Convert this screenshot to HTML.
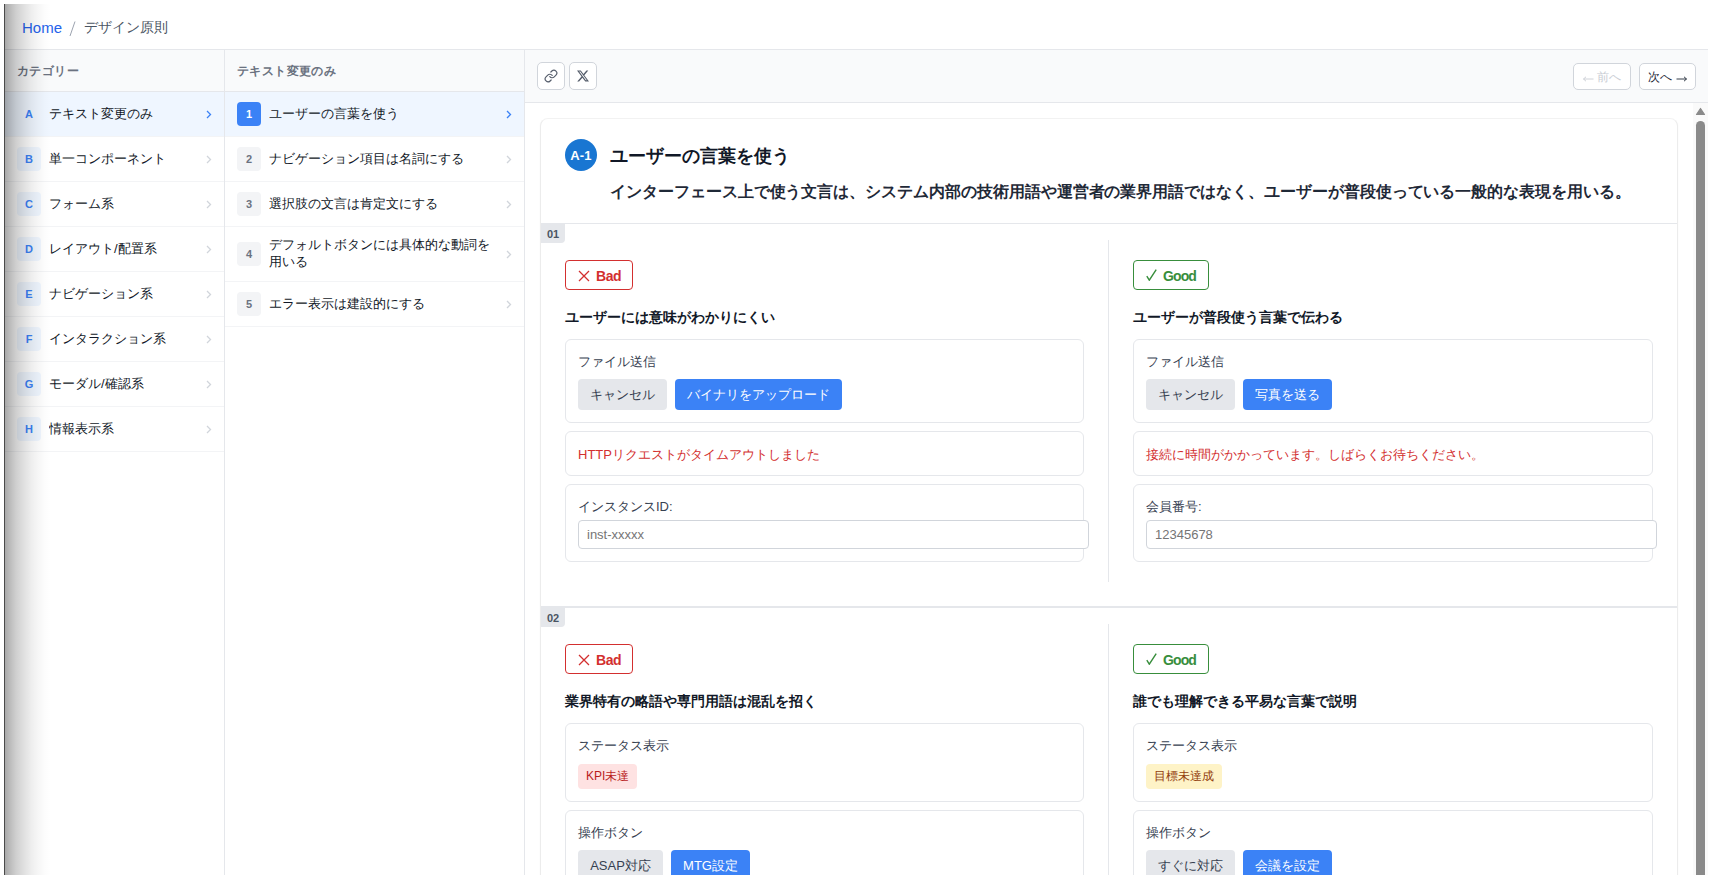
<!DOCTYPE html>
<html lang="ja"><head><meta charset="utf-8">
<style>
*{box-sizing:border-box;margin:0;padding:0}
html,body{width:1719px;height:879px;overflow:hidden;background:#fff;font-family:"Liberation Sans",sans-serif;color:#1f2937}
#frame{position:absolute;left:4px;top:4px;width:1704px;height:871px;overflow:hidden;background:#fff;border-left:1px solid #4a4a4a}
#shade{position:absolute;left:0;top:0;width:48px;height:871px;z-index:50;pointer-events:none;
 background:linear-gradient(to right,rgba(0,0,0,.34) 0px,rgba(0,0,0,.28) 4px,rgba(0,0,0,.19) 11px,rgba(0,0,0,.12) 19px,rgba(0,0,0,.07) 26px,rgba(0,0,0,.035) 33px,rgba(0,0,0,.012) 40px,rgba(0,0,0,0) 46px)}
#crumb{position:absolute;left:0;top:0;width:1703px;height:46px;border-bottom:1px solid #e5e7eb;font-size:14px;line-height:20px}
#crumb .home{position:absolute;left:17px;top:14px;font-size:15px;color:#2563eb}
#crumb .sep{position:absolute;left:64px;top:17px}
#crumb .cur{position:absolute;left:79px;top:13px;color:#4b5563;white-space:nowrap}
.pane{position:absolute;top:46px;height:825px;border-right:1px solid #e5e7eb;background:#fff}
#cat{left:0;width:220px}
#mid{left:220px;width:300px}
.ph{height:42px;border-bottom:1px solid #e5e7eb;background:#f9fafb;font-size:12px;font-weight:bold;color:#6b7280;line-height:16px;padding:13px 0 0 12px;letter-spacing:.4px}
.it{display:flex;align-items:center;height:45px;border-bottom:1px solid #f3f4f6;padding:10px 12px;font-size:13px;line-height:17px;color:#111827}
.it.sel{background:#eff6ff}
.bd{flex:none;width:24px;height:24px;border-radius:4px;display:flex;align-items:center;justify-content:center;font-size:11px;font-weight:bold;margin-right:8px}
#cat .bd{background:#eff6ff;color:#3b82f6}
#mid .bd{background:#f3f4f6;color:#6b7280}
#mid .sel .bd{background:#3b82f6;color:#fff}
.it .tx{flex:1;position:relative;top:-1px;white-space:nowrap;overflow:hidden}
.chev{flex:none;width:8px;height:10px;margin-left:8px;position:relative}
.chev svg{position:absolute;left:2px;top:1px}
#content{position:absolute;left:520px;top:46px;width:1183px;height:825px;background:#fff}
#tool{position:absolute;left:0;top:0;width:1183px;height:53px;background:#f9fafb;border-bottom:1px solid #e5e7eb}
.ib{position:absolute;top:12px;width:28px;height:28px;border:1px solid #d1d5db;border-radius:5px;background:#fff;display:flex;align-items:center;justify-content:center}
.nb{position:absolute;top:13px;height:27px;border:1px solid #d1d5db;border-radius:5px;background:#fff;font-size:12px;line-height:27px;text-align:center;color:#1f2937;white-space:nowrap}
.nb .ar{vertical-align:middle;position:relative;top:1px}
#scroll{position:absolute;left:0;top:53px;width:1183px;height:772px;overflow:hidden}
#sbar{position:absolute;right:0;top:0;width:15px;height:772px;background:#fafafa}
#sbar .up{position:absolute;left:2px;top:4px}
#sbar .th{position:absolute;left:3px;top:18px;width:9px;height:800px;border-radius:5px;background:#8a8a8a}
#card{position:absolute;left:15px;top:15px;width:1138px;border:1px solid #ececec;border-top-color:#f2f2f2;border-radius:8px;background:#fff;box-shadow:0 1px 2px rgba(0,0,0,.04)}
#ch{height:105px;border-bottom:1px solid #e5e7eb;position:relative}
#ch .circ{position:absolute;left:24px;top:20px;width:32px;height:32px;border-radius:50%;background:#1976d2;color:#fff;font-size:13px;font-weight:bold;line-height:34px;text-align:center;letter-spacing:.2px;white-space:nowrap}
#ch .ttl{position:absolute;left:69px;top:25px;font-size:18px;line-height:24px;font-weight:bold;color:#111827;white-space:nowrap}
#ch .dsc{position:absolute;left:69px;top:62px;letter-spacing:-.05px;font-size:16px;line-height:22px;font-weight:bold;color:#1f2937;white-space:nowrap}
.sec{position:relative;height:382px}
.sec+.sec{border-top:2px solid #e5e7eb}
.tag{position:absolute;left:0;top:0;width:24px;height:19px;background:#e5e7eb;border-radius:0 0 4px 0;font-size:11px;font-weight:bold;color:#4b5563;line-height:20px;text-align:center}
.cols{position:absolute;left:0;top:16px;width:1136px;height:342px;display:flex}
.col{width:567px;height:342px;padding:20px 24px;position:relative}
.col+.col{width:569px;border-left:1px solid #e5e7eb}
.badge{position:relative;width:68px;height:30px;border:1px solid #d32f2f;border-radius:4px;color:#d32f2f;font-size:14px;font-weight:bold;line-height:30px;white-space:nowrap}
.badge .ic{position:absolute;left:12px;top:9px}
.badge span{position:absolute;left:30px;top:0;letter-spacing:-.4px}
.badge.g .ic{left:12px;top:8px}
.badge.g span{left:29px;letter-spacing:-.9px}
.badge.g{width:76px;border-color:#388e3c;color:#388e3c}
.sub{margin-top:17px;font-size:14px;font-weight:bold;line-height:20px;color:#111827;white-space:nowrap}
.box{margin-top:12px;border:1px solid #e5e7eb;border-radius:6px;padding:12px;position:relative}
.box+.box{margin-top:8px}
.lbl{font-size:13px;line-height:19px;color:#374151;margin-bottom:8px;white-space:nowrap}
.btns{display:flex;gap:8px}
.btn{height:31px;border-radius:4px;font-size:13px;line-height:31px;padding:0;text-align:center;white-space:nowrap;overflow:hidden}
.btn.gr{background:#e5e7eb;color:#374151}
.btn.bl{background:#3b82f6;color:#fff}
.err{font-size:13px;line-height:19px;color:#d32f2f;white-space:nowrap;position:relative;top:1px}
.inp{width:511px;height:29px;border:1px solid #d1d5db;border-radius:4px;padding:0 8px;font-size:13px;line-height:27px;color:#757575;background:#fff}
.pill{display:block;text-align:center;white-space:nowrap;height:25px;border-radius:4px;padding:0 8px;font-size:12px;line-height:25px}
.pill.r{background:#fee2e2;color:#b91c1c}
.pill.y{background:#fef3c7;color:#92400e}
</style></head><body>
<div id="frame">
 <div id="shade"></div>
 <div id="crumb"><span class="home">Home</span><svg class="sep" width="7" height="16" viewBox="0 0 7 16"><path d="M6 0.5L1 15" stroke="#9ca3af" stroke-width="1"/></svg><span class="cur">デザイン原則</span></div>
 <div class="pane" id="cat">
  <div class="ph">カテゴリー</div>
  <div class="it sel"><span class="bd" style="background:transparent">A</span><span class="tx">テキスト変更のみ</span><span class="chev"><svg width="6" height="9" viewBox="0 0 6 9"><path d="M1 1l3.5 3.5L1 8" fill="none" stroke="#3b82f6" stroke-width="1.3"/></svg></span></div>
  <div class="it"><span class="bd">B</span><span class="tx">単一コンポーネント</span><span class="chev"><svg width="6" height="9" viewBox="0 0 6 9"><path d="M1 1l3.5 3.5L1 8" fill="none" stroke="#d1d5db" stroke-width="1.3"/></svg></span></div>
  <div class="it"><span class="bd">C</span><span class="tx">フォーム系</span><span class="chev"><svg width="6" height="9" viewBox="0 0 6 9"><path d="M1 1l3.5 3.5L1 8" fill="none" stroke="#d1d5db" stroke-width="1.3"/></svg></span></div>
  <div class="it"><span class="bd">D</span><span class="tx">レイアウト/配置系</span><span class="chev"><svg width="6" height="9" viewBox="0 0 6 9"><path d="M1 1l3.5 3.5L1 8" fill="none" stroke="#d1d5db" stroke-width="1.3"/></svg></span></div>
  <div class="it"><span class="bd">E</span><span class="tx">ナビゲーション系</span><span class="chev"><svg width="6" height="9" viewBox="0 0 6 9"><path d="M1 1l3.5 3.5L1 8" fill="none" stroke="#d1d5db" stroke-width="1.3"/></svg></span></div>
  <div class="it"><span class="bd">F</span><span class="tx">インタラクション系</span><span class="chev"><svg width="6" height="9" viewBox="0 0 6 9"><path d="M1 1l3.5 3.5L1 8" fill="none" stroke="#d1d5db" stroke-width="1.3"/></svg></span></div>
  <div class="it"><span class="bd">G</span><span class="tx">モーダル/確認系</span><span class="chev"><svg width="6" height="9" viewBox="0 0 6 9"><path d="M1 1l3.5 3.5L1 8" fill="none" stroke="#d1d5db" stroke-width="1.3"/></svg></span></div>
  <div class="it"><span class="bd">H</span><span class="tx">情報表示系</span><span class="chev"><svg width="6" height="9" viewBox="0 0 6 9"><path d="M1 1l3.5 3.5L1 8" fill="none" stroke="#d1d5db" stroke-width="1.3"/></svg></span></div>
 </div>
 <div class="pane" id="mid">
  <div class="ph">テキスト変更のみ</div>
  <div class="it sel"><span class="bd">1</span><span class="tx">ユーザーの言葉を使う</span><span class="chev"><svg width="6" height="9" viewBox="0 0 6 9"><path d="M1 1l3.5 3.5L1 8" fill="none" stroke="#3b82f6" stroke-width="1.3"/></svg></span></div>
  <div class="it"><span class="bd">2</span><span class="tx">ナビゲーション項目は名詞にする</span><span class="chev"><svg width="6" height="9" viewBox="0 0 6 9"><path d="M1 1l3.5 3.5L1 8" fill="none" stroke="#d1d5db" stroke-width="1.3"/></svg></span></div>
  <div class="it"><span class="bd">3</span><span class="tx">選択肢の文言は肯定文にする</span><span class="chev"><svg width="6" height="9" viewBox="0 0 6 9"><path d="M1 1l3.5 3.5L1 8" fill="none" stroke="#d1d5db" stroke-width="1.3"/></svg></span></div>
  <div class="it" style="height:55px"><span class="bd">4</span><span class="tx" style="height:34px">デフォルトボタンには具体的な動詞を<br>用いる</span><span class="chev"><svg width="6" height="9" viewBox="0 0 6 9"><path d="M1 1l3.5 3.5L1 8" fill="none" stroke="#d1d5db" stroke-width="1.3"/></svg></span></div>
  <div class="it"><span class="bd">5</span><span class="tx">エラー表示は建設的にする</span><span class="chev"><svg width="6" height="9" viewBox="0 0 6 9"><path d="M1 1l3.5 3.5L1 8" fill="none" stroke="#d1d5db" stroke-width="1.3"/></svg></span></div>
 </div>
 <div id="content">
  <div id="tool">
   <div class="ib" style="left:12px"><svg width="14" height="14" viewBox="0 0 24 24" fill="none" stroke="#555d6b" stroke-width="2" stroke-linecap="round" stroke-linejoin="round"><path d="M10 13a5 5 0 0 0 7.54.54l3-3a5 5 0 0 0-7.07-7.07l-1.72 1.71"/><path d="M14 11a5 5 0 0 0-7.54-.54l-3 3a5 5 0 0 0 7.07 7.07l1.71-1.71"/></svg></div>
   <div class="ib" style="left:44px"><svg width="12" height="12" viewBox="0 0 24 24" fill="#555d6b"><path d="M18.901 1.153h3.68l-8.04 9.19L24 22.846h-7.406l-5.8-7.584-6.638 7.584H.474l8.6-9.83L0 1.154h7.594l5.243 6.932ZM17.61 20.644h2.039L6.486 3.24H4.298Z"/></svg></div>
   <div class="nb" style="left:1048px;width:58px;color:#c9cdd4"><svg class="ar" width="11" height="6" viewBox="0 0 11 6"><path d="M0.5 3H10.5M0.5 3L3 0.8M0.5 3L3 5.2" fill="none" stroke="#c9cdd4" stroke-width="0.9"/></svg> 前へ</div>
   <div class="nb" style="left:1114px;width:57px">次へ <svg class="ar" width="11" height="6" viewBox="0 0 11 6"><path d="M0.5 3H10.5M10.5 3L8 0.8M10.5 3L8 5.2" fill="none" stroke="#1f2937" stroke-width="0.9"/></svg></div>
  </div>
  <div id="scroll">
   <div id="card">
    <div id="ch">
     <div class="circ">A-1</div>
     <div class="ttl">ユーザーの言葉を使う</div>
     <div class="dsc">インターフェース上で使う文言は、システム内部の技術用語や運営者の業界用語ではなく、ユーザーが普段使っている一般的な表現を用いる。</div>
    </div>
    <div class="sec">
     <div class="tag">01</div>
     <div class="cols">
      <div class="col">
       <div class="badge"><svg class="ic" width="12" height="12" viewBox="0 0 12 12"><path d="M1 1L11 11M11 1L1 11" stroke="#d32f2f" stroke-width="1.3" fill="none"/></svg><span>Bad</span></div>
       <div class="sub">ユーザーには意味がわかりにくい</div>
       <div class="box"><div class="lbl">ファイル送信</div><div class="btns"><span class="btn gr" style="width:89px">キャンセル</span><span class="btn bl" style="width:167px">バイナリをアップロード</span></div></div>
       <div class="box"><div class="err">HTTPリクエストがタイムアウトしました</div></div>
       <div class="box"><div class="lbl" style="line-height:15px;padding-top:2px;margin-bottom:6px">インスタンスID:</div><div class="inp">inst-xxxxx</div></div>
      </div>
      <div class="col">
       <div class="badge g"><svg class="ic" width="11" height="12" viewBox="0 0 11 12"><path d="M0.8 7.2L3.3 11.2L10.2 0.6" stroke="#388e3c" stroke-width="1.4" fill="none" stroke-linejoin="miter"/></svg><span>Good</span></div>
       <div class="sub">ユーザーが普段使う言葉で伝わる</div>
       <div class="box"><div class="lbl">ファイル送信</div><div class="btns"><span class="btn gr" style="width:89px">キャンセル</span><span class="btn bl" style="width:89px">写真を送る</span></div></div>
       <div class="box"><div class="err">接続に時間がかかっています。しばらくお待ちください。</div></div>
       <div class="box"><div class="lbl" style="line-height:15px;padding-top:2px;margin-bottom:6px">会員番号:</div><div class="inp">12345678</div></div>
      </div>
     </div>
    </div>
    <div class="sec">
     <div class="tag">02</div>
     <div class="cols">
      <div class="col">
       <div class="badge"><svg class="ic" width="12" height="12" viewBox="0 0 12 12"><path d="M1 1L11 11M11 1L1 11" stroke="#d32f2f" stroke-width="1.3" fill="none"/></svg><span>Bad</span></div>
       <div class="sub">業界特有の略語や専門用語は混乱を招く</div>
       <div class="box"><div class="lbl" style="margin-bottom:9px">ステータス表示</div><span class="pill r" style="width:59px">KPI未達</span></div>
       <div class="box"><div class="lbl">操作ボタン</div><div class="btns"><span class="btn gr" style="width:85px">ASAP対応</span><span class="btn bl" style="width:79px">MTG設定</span></div></div>
      </div>
      <div class="col">
       <div class="badge g"><svg class="ic" width="11" height="12" viewBox="0 0 11 12"><path d="M0.8 7.2L3.3 11.2L10.2 0.6" stroke="#388e3c" stroke-width="1.4" fill="none" stroke-linejoin="miter"/></svg><span>Good</span></div>
       <div class="sub">誰でも理解できる平易な言葉で説明</div>
       <div class="box"><div class="lbl" style="margin-bottom:9px">ステータス表示</div><span class="pill y" style="width:76px">目標未達成</span></div>
       <div class="box"><div class="lbl">操作ボタン</div><div class="btns"><span class="btn gr" style="width:89px">すぐに対応</span><span class="btn bl" style="width:89px">会議を設定</span></div></div>
      </div>
     </div>
    </div>
   </div>
   <div id="sbar"><svg class="up" width="11" height="9" viewBox="0 0 11 9"><path d="M5.5 1.5L9.5 7.5H1.5Z" fill="#8a8a8a" stroke="#8a8a8a" stroke-width="1.2" stroke-linejoin="round"/></svg><div class="th"></div></div>
  </div>
 </div>
</div>
</body></html>
